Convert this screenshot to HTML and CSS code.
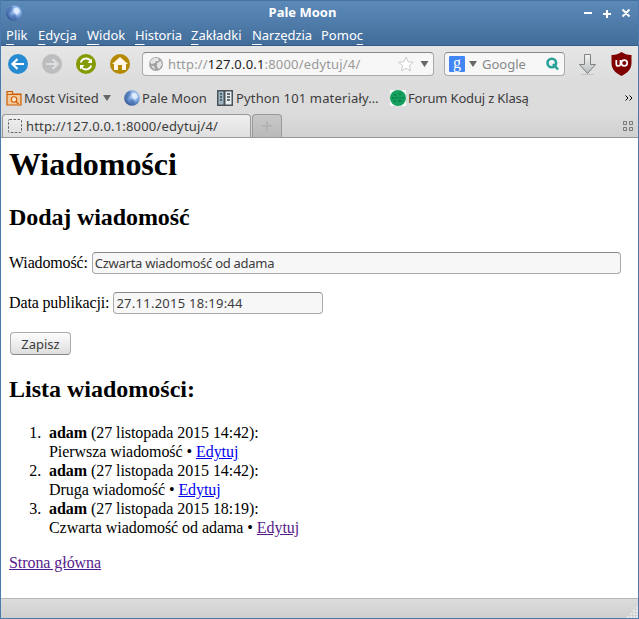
FILE: index.html
```html
<!DOCTYPE html>
<html lang="pl">
<head>
<meta charset="utf-8">
<title>Pale Moon</title>
<link rel="stylesheet" href="styles.css">
</head>
<body>
<svg class="defs" width="0" height="0" aria-hidden="true">
  <defs>
    <radialGradient id="moon-fill" cx=".65" cy=".35" r=".75"><stop offset="0" stop-color="#dbeaff"/><stop offset=".45" stop-color="#7fa8e0"/><stop offset="1" stop-color="#274a8c"/></radialGradient>
    <linearGradient id="arrow-fill" x2="0" y2="1"><stop offset="0" stop-color="#f5f6f6"/><stop offset="1" stop-color="#b5babb"/></linearGradient>
    <symbol id="moon" viewBox="0 0 16 16"><circle cx="8" cy="8" r="7.8" fill="url(#moon-fill)"/><path d="M3 3Q5 1 7 2L6 6 3 8 2 7ZM7 9l3 1 1 3-2 2-3-3Z" fill="#31579b" opacity=".4"/><path d="M8 3l4 0 2 4-3 3-3-3Z" fill="#eaf3ff" opacity=".7"/></symbol>
  </defs>
</svg>
<div class="window">
  <header class="chrome-top">
    <div class="titlebar">
      <svg class="app-icon" width="16" height="16"><use href="#moon"/></svg>
      <span class="title">Pale Moon</span>
      <svg class="controls" width="48" height="10" viewBox="0 0 48 10"><path d="M0 5H8M19 6H27M23 2V10M38.500 1.500L45.500 8.500M45.500 1.500L38.500 8.500" stroke="#fff" stroke-width="2" fill="none"/></svg>
    </div>
    <nav class="menubar">
      <span class="m1"><u>P</u>lik</span><span class="m2"><u>E</u>dycja</span><span class="m3"><u>W</u>idok</span><span class="m4"><u>H</u>istoria</span><span class="m5"><u>Z</u>akładki</span><span class="m6"><u>N</u>arzędzia</span><span class="m7">Pomo<u>c</u></span>
    </nav>
  </header>
  <div class="toolbar">
    <svg class="nav" width="122" height="20" viewBox="0 0 122 20">
      <circle cx="10" cy="10" r="10" fill="#268bd2"/><path d="M16 10H5M9.5 5L4.5 10l5 5" stroke="#fff" stroke-width="2.2" fill="none"/>
      <circle cx="44" cy="10" r="10" fill="#bbbdbe"/><path d="M38 10H49M44.500 5l5 5-5 5" stroke="#dedede" stroke-width="2.2" fill="none"/>
      <circle cx="78" cy="10" r="10" fill="#859900"/><path d="M72.800 8.500a5.500 5.500 0 0 1 9.500-2M83.200 11.500a5.500 5.500 0 0 1-9.500 2" stroke="#fff" stroke-width="1.900" fill="none"/><path d="M84 4.500V9H79.500ZM72 15.500V11H76.500Z" fill="#fff"/>
      <circle cx="112" cy="10" r="10" fill="#b58900"/><path d="M112 3l8 7h-2v6h-4v-5h-4v5h-4v-6h-2Z" fill="#fff8e8"/>
    </svg>
    <div class="address">
      <svg width="14" height="14" viewBox="0 0 14 14"><circle cx="7" cy="7" r="7" fill="#a3a3a3"/><path d="M5 1l4 0 1 3-3 0-1 2-3 1-2-1 1-3ZM8 6l4-2 1 4-3 4-2-2ZM2 9l3 0 1 4Z" fill="#e4e4e4"/></svg>
      <span class="url">http://<b>127.0.0.1</b>:8000/edytuj/4/</span>
      <svg class="star" width="16" height="16" viewBox="0 0 16 16"><path d="M8 1l2.100 4.700 5.200.5-3.900 3.500 1.100 5.200L8 12.200l-4.500 2.700 1.100-5.200L.7 6.200l5.200-.5Z" fill="#fff" stroke="#ccc"/></svg>
      <svg width="9" height="6" viewBox="0 0 9 6"><path d="M.5 0h8L4.500 6Z" fill="#666"/></svg>
    </div>
    <div class="search">
      <span class="engine">g</span>
      <svg width="8" height="6" viewBox="0 0 8 6"><path d="M0 0h8L4 6Z" fill="#666"/></svg>
      <span class="hint">Google</span>
      <svg class="lens" width="13" height="14" viewBox="0 0 13 14"><circle cx="5.800" cy="6" r="4.300" fill="none" stroke="#2aa198" stroke-width="2.600"/><path d="M7 7l5 5.500" stroke="#2aa198" stroke-width="2.600"/></svg>
    </div>
    <svg class="download" width="19" height="23" viewBox="0 0 19 23"><path d="M6.500 1.500h6v10h5L9.500 20.500 1.500 11.500h5Z" fill="url(#arrow-fill)" stroke="#7c8181"/><path d="M3 21.500h13" stroke="#aaa" opacity=".5"/></svg>
    <svg class="shield" width="21" height="24" viewBox="0 0 21 24"><path d="M10.500 0C13.500 2 17 3.200 20.500 3v8c0 6-4 10-10 13C4.500 21 .5 17 .5 11V3C4 3.200 7.500 2 10.500 0Z" fill="#800000"/><path d="M5.300 8v4q0 2 2 2t2.200-2V8" fill="none" stroke="#fff" stroke-width="1.700"/><circle cx="13.300" cy="11" r="2.900" fill="none" stroke="#fff" stroke-width="1.700"/></svg>
  </div>
  <div class="bookmarks">
    <svg class="k1" width="16" height="16" viewBox="0 0 16 16"><path d="M1 15V1.500H6.500V4H15V15Z" fill="#f4c99d" stroke="#ce5c00" stroke-width="1.200"/><path d="M1 4.500H15" stroke="#ce5c00"/><circle cx="8" cy="9.500" r="2.700" fill="#fbe7d0" stroke="#ce5c00" stroke-width="1.100"/><path d="M10 11.500l2.500 2.500" stroke="#ce5c00" stroke-width="1.300"/></svg>
    <span class="b1">Most Visited</span>
    <svg class="k2" width="8" height="6" viewBox="0 0 8 6"><path d="M0 0h8L4 6Z" fill="#666"/></svg>
    <svg class="k3" width="16" height="16"><use href="#moon"/></svg>
    <span class="b2">Pale Moon</span>
    <svg class="k4" width="16" height="16" viewBox="0 0 16 16"><path d="M0 0h16v16H0Z" fill="#4a5359"/><path d="M1.500 1.500h5v13h-5Z" fill="#9eb6c5"/><path d="M8.500 1.500h6v13h-6Z" fill="#e8edef"/><path d="M3 4h2M3 7h2M3 10h2M10 4h3M10 7h3M10 10h3" stroke="#39444b" stroke-width="1.400"/></svg>
    <span class="b3">Python 101 materiały…</span>
    <svg class="k5" width="16" height="16" viewBox="0 0 16 16"><path d="M0 0h16v16H0Z" fill="#f7faf8"/><circle cx="8" cy="8" r="8" fill="#15a05f"/><path d="M4 5h2M9 4h2M2 8h2M5.500 8h2M9 8h2M12 8h2M4 11h2M8 11h4" stroke="#0b6d40" stroke-width="1.200"/></svg>
    <span class="b4">Forum Koduj z Klasą</span>
    <svg class="more" width="8" height="6" viewBox="0 0 8 6"><path d="M.5.5L3 3 .5 5.500M4.500.5L7 3 4.500 5.500" fill="none" stroke="#000"/></svg>
  </div>
  <div class="tabs">
    <div class="tab"><svg width="14" height="14" viewBox="0 0 14 14"><rect x=".5" y=".5" width="13" height="13" rx="1" fill="none" stroke="#666" stroke-dasharray="2.500 1.500"/></svg><span>http://127.0.0.1:8000/edytuj/4/</span></div>
    <div class="newtab"><svg width="10" height="10" viewBox="0 0 10 10"><path d="M0 5h10M5 0v10" stroke="#b3b3b3" stroke-width="2"/></svg></div>
    <svg class="groups" width="10" height="10" viewBox="0 0 10 10"><path d="M.5.5h3v3h-3ZM6.500.5h3v3h-3ZM.5 6.500h3v3h-3ZM6.500 6.500h3v3h-3Z" fill="none" stroke="#777"/></svg>
  </div>
  <main class="page">
    <h1>Wiadomości</h1>
    <h2 class="form-title">Dodaj wiadomość</h2>
    <form>
      <label class="field first">Wiadomość: <input class="message" type="text" value="Czwarta wiadomość od adama"></label>
      <label class="field">Data publikacji: <input class="date" type="text" value="27.11.2015 18:19:44"></label>
      <button type="button">Zapisz</button>
    </form>
    <h2 class="list-title">Lista wiadomości:</h2>
    <ol>
      <li><b>adam</b> (27 listopada 2015 14:42):<br>Pierwsza wiadomość • <a href="#1">Edytuj</a></li>
      <li><b>adam</b> (27 listopada 2015 14:42):<br>Druga wiadomość • <a href="#2">Edytuj</a></li>
      <li><b>adam</b> (27 listopada 2015 18:19):<br>Czwarta wiadomość od adama • <a class="seen" href="#3">Edytuj</a></li>
    </ol>
    <a class="seen" href="#home">Strona główna</a>
  </main>
  <footer class="status"><svg width="12" height="12" viewBox="0 0 12 12"><path d="M1 11h2M4 11h2M7 11h2M10 11h2M4 8h2M7 8h2M10 8h2M7 5h2M10 5h2M10 2h2" stroke="#e8e8e8" stroke-width="2"/></svg></footer>
</div>
</body>
</html>
```
FILE: styles.css
```css
* { box-sizing: border-box; }
body { margin: 0; font-family: "Noto Sans", sans-serif; font-size: 13px; color: #3c3c3c; overflow: hidden; }
svg { display: block; flex: none; }
.defs { position: absolute; }
.window { width: 639px; height: 619px; border: 1px solid #4a7aae; border-top: 0; background: #dcdcdc; display: flex; flex-direction: column; }

.chrome-top { height: 46px; background: linear-gradient(#5c8ab8, #426d9b); border-top: 1px solid #44719f; border-bottom: 1px solid #345b85; color: #fff; }
.titlebar { height: 23px; display: flex; align-items: center; padding: 0 6px 0 5px; }
.title { flex: 1; text-align: center; font-weight: bold; padding-right: 1px; margin-top: -1px; }
.controls { overflow: visible; margin-right: 0; }
.menubar { height: 22px; display: flex; line-height: 22px; padding-left: 5px; white-space: nowrap; }
.menubar u { text-underline-offset: 4px; text-decoration-skip-ink: none; }
.m1 { width: 32px; } .m2 { width: 49px; } .m3 { width: 48px; } .m4 { width: 56px; letter-spacing: -.1px; } .m5 { width: 61px; } .m6 { width: 69px; letter-spacing: -.1px; }

.toolbar { height: 36px; display: flex; align-items: center; background: linear-gradient(#e6e6e6, #dcdcdc); padding-left: 7px; }
.address, .search { height: 24px; border: 1px solid #aaa; border-top-color: #888; border-radius: 4px; background: #f7f7f7; display: flex; align-items: center; }
.address { width: 292px; margin-left: 12px; padding: 0 4px 0 6px; }
.url { margin-left: 5px; flex: 1; color: #999; white-space: nowrap; letter-spacing: .18px; }
.url b { font-weight: normal; color: #222; }
.star { margin-right: 6px; }
.search { width: 121px; margin-left: 10px; padding: 0 5px 0 4px; }
.engine { width: 16px; height: 16px; background: #4285f4; border-radius: 1px; color: #fff; font: 16px/13px "Liberation Serif", serif; text-align: center; margin-right: 4px; }
.hint { flex: 1; margin-left: 5px; color: #888; }
.download { margin-left: 13px; }
.shield { margin-left: 14px; }

.bookmarks { height: 32px; display: flex; align-items: center; padding: 0 5px; white-space: nowrap; }
.b1 { margin-left: 2px; width: 77px; } .k2 { margin-left: 2px; } .k3 { margin-left: 13px; }
.b2 { margin-left: 2px; width: 66px; } .k4 { margin-left: 9px; }
.b3 { margin-left: 3px; width: 144px; letter-spacing: .15px; } .k5 { margin-left: 10px; }
.b4 { margin-left: 2px; flex: 1; letter-spacing: -.17px; }

.tabs { height: 24px; display: flex; align-items: flex-end; background: linear-gradient(#dcdcdc, #d0d0d0); border-bottom: 1px solid #999; padding-left: 1px; }
.tab, .newtab { height: 23px; border: 1px solid #999; border-bottom: 0; border-radius: 4px 4px 0 0; display: flex; align-items: center; }
.tab { width: 249px; background: linear-gradient(#f0f0f0, #dfdfdf); padding-left: 5px; }
.tab span { margin-left: 4px; white-space: nowrap; letter-spacing: .17px; }
.newtab { width: 30px; margin-left: 1px; background: linear-gradient(#c8c8c8, #bababa); justify-content: center; }
.groups { margin: 0 5px 6px auto; }

.page { height: 460px; background: #fff; color: #000; font: 16px/19px "Liberation Serif", serif; letter-spacing: -.06px; padding: 8px; }
h1 { font-size: 32px; line-height: 37px; margin: 0 0 21px; }
h2 { font-size: 24px; line-height: 27px; margin: 0; }
.form-title { letter-spacing: -.1px; }
form { padding-top: 21px; }
.field { display: flex; align-items: center; height: 22px; line-height: 22px; margin-bottom: 18px; white-space: nowrap; letter-spacing: -.14px; }
input { font: 13px "Noto Sans", sans-serif; color: #3c3c3c; height: 22px; padding: 0 2px; border: 1px solid #aaa; border-top-color: #888; border-radius: 4px; background: #f7f7f7; margin: 0 0 0 4px; }
.message { width: 529px; letter-spacing: -.27px; }
.date { width: 210px; letter-spacing: .26px; }
button { display: block; width: 61px; height: 23px; font: 13px "Noto Sans", sans-serif; color: #3c3c3c; padding: 0; border: 1px solid #aaa; border-bottom-color: #888; border-radius: 4px; background: linear-gradient(#fdfdfd, #dedede); margin: 0 0 0 1px; }
.list-title { margin-top: 21px; letter-spacing: 0; }
ol { margin: 20px 0 16px; padding-left: 40px; }
li::marker { content: counter(list-item) ".\00a0\00a0"; }
a { color: #00e; }
a.seen { color: #551a8b; }

.status { flex: 1; background: linear-gradient(#dcdcdc, #cfcfcf); border-top: 1px solid #b5b5b5; display: flex; justify-content: flex-end; align-items: flex-end; }
```
